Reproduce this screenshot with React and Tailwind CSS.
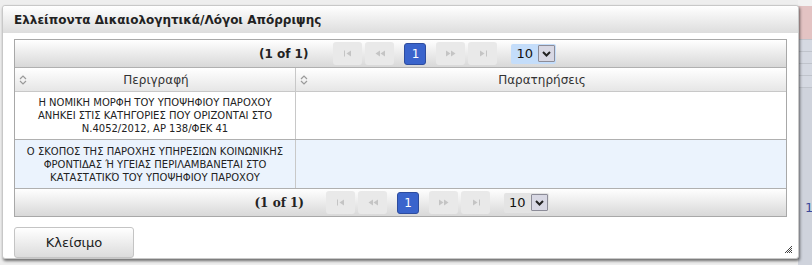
import React from 'react';

const rows = [
  ['Η ΝΟΜΙΚΗ ΜΟΡΦΗ ΤΟΥ ΥΠΟΨΗΦΙΟΥ ΠΑΡΟΧΟΥ', 'ΑΝΗΚΕΙ ΣΤΙΣ ΚΑΤΗΓΟΡΙΕΣ ΠΟΥ ΟΡΙΖΟΝΤΑΙ ΣΤΟ', 'Ν.4052/2012, ΑΡ 138/ΦΕΚ 41'],
  ['Ο ΣΚΟΠΟΣ ΤΗΣ ΠΑΡΟΧΗΣ ΥΠΗΡΕΣΙΩΝ ΚΟΙΝΩΝΙΚΗΣ', 'ΦΡΟΝΤΙΔΑΣ Ή ΥΓΕΙΑΣ ΠΕΡΙΛΑΜΒΑΝΕΤΑΙ ΣΤΟ', 'ΚΑΤΑΣΤΑΤΙΚΌ ΤΟΥ ΥΠΟΨΗΦΙΟΥ ΠΑΡΟΧΟΥ'],
];

const SortIcon = () => (
  <svg width="8" height="10" viewBox="0 0 8 10" className="shrink-0">
    <path d="M1 4 L4 1 L7 4" fill="none" stroke="#9a9a9a" strokeWidth="1.2" />
    <path d="M1 6 L4 9 L7 6" fill="none" stroke="#9a9a9a" strokeWidth="1.2" />
  </svg>
);

const NavIcon = ({ kind }) => {
  const c = '#c4c4c4';
  if (kind === 'first')
    return (
      <svg width="10" height="7" viewBox="0 0 10 7"><rect x="1" y="0.5" width="1" height="6" fill={c} /><path d="M8 0.5 L3.5 3.5 L8 6.5Z" fill={c} /></svg>
    );
  if (kind === 'prev')
    return (
      <svg width="12" height="7" viewBox="0 0 12 7"><path d="M6 0.5 L1.5 3.5 L6 6.5Z M11 0.5 L6.5 3.5 L11 6.5Z" fill={c} /></svg>
    );
  if (kind === 'next')
    return (
      <svg width="12" height="7" viewBox="0 0 12 7"><path d="M1 0.5 L5.5 3.5 L1 6.5Z M6 0.5 L10.5 3.5 L6 6.5Z" fill={c} /></svg>
    );
  return (
    <svg width="10" height="7" viewBox="0 0 10 7"><path d="M2 0.5 L6.5 3.5 L2 6.5Z" fill={c} /><rect x="8" y="0.5" width="1" height="6" fill={c} /></svg>
  );
};

const NavBtn = ({ kind }) => (
  <div className="w-[29px] h-[23px] rounded-[3px] bg-[#e9e9e9] flex items-center justify-center">
    <NavIcon kind={kind} />
  </div>
);

const Pager = ({ top }) => (
  <div
    className={`h-[28px] bg-gradient-to-b from-white to-[#d8d8d8] flex items-center justify-center ${top ? 'border-b border-[#b0b0b0] pl-[14px]' : 'border-t border-[#b0b0b0] pl-[2px]'}`}
  >
    <span
      className={`text-[12px] font-bold text-[#222] ${top ? 'mr-[25px]' : 'mr-[22px]'}`}
      style={{ fontFamily: top ? '"DejaVu Sans", sans-serif' : '"DejaVu Serif", serif' }}
    >
      (1 of 1)
    </span>
    <div className="flex items-center gap-[3px]">
      <NavBtn kind="first" />
      <NavBtn kind="prev" />
    </div>
    <div className="mx-[10px] w-[22px] h-[22px] rounded-[3px] bg-[#3a64cc] border border-[#2d4c9e] text-white text-[12px] flex items-center justify-center">
      1
    </div>
    <div className="flex items-center gap-[3px]">
      <NavBtn kind="next" />
      <NavBtn kind="last" />
    </div>
    <div className={`ml-[14px] h-[20px] flex items-center rounded-[2px] ${top ? 'bg-[#c4ddfa]' : 'bg-[#e4e4e4]'}`}>
      <span className="px-[5px] text-[13px] text-[#111]">10</span>
      <div className="w-[17px] h-[17px] mr-[1px] border border-[#8c8c98] bg-[#d8d8e4] rounded-[1px] flex items-center justify-center">
        <svg width="9" height="6" viewBox="0 0 9 6"><path d="M1 1 L4.5 4.5 L8 1" fill="none" stroke="#222" strokeWidth="2" /></svg>
      </div>
    </div>
  </div>
);

export default function App() {
  return (
    <div
      className="relative w-[812px] h-[265px] overflow-hidden bg-[#eeeeee]"
      style={{ fontFamily: '"DejaVu Sans", Verdana, sans-serif' }}
    >
      {/* page behind the dialog */}
      <div className="absolute right-0 top-0 w-[14px] h-full flex flex-col">
        <div className="h-[6px] bg-[#f2f2f2]" />
        <div className="h-[33px] bg-[#e3c3c3]" />
        <div className="h-[12px] bg-[#d5d9e2] border-t border-[#c0c4cc]" />
        <div className="h-[12px] bg-[#d5d9e2] border-t border-[#c0c4cc]" />
        <div className="h-[12px] bg-[#d5d9e2] border-t border-[#c0c4cc]" />
        <div className="h-[12px] bg-[#d5d9e2] border-t border-[#c0c4cc]" />
        <div className="flex-1 bg-[#cfd3dc] border-t border-[#c0c4cc] pt-[110px] pl-[7px] text-[13px] text-[#3a4a9a]">1</div>
      </div>

      {/* dialog */}
      <div className="absolute left-[2px] top-[5px] w-[797px] h-[254px] bg-white border border-[#c8c8c8] rounded-[3px] shadow-[1px_2px_3px_rgba(0,0,0,0.55)] flex flex-col">
        <div className="h-[28px] bg-gradient-to-b from-white to-[#dddddd] flex items-center pl-[11px] rounded-t-[3px]">
          <span className="text-[12px] font-bold text-[#222]">Ελλείποντα Δικαιολογητικά/Λόγοι Απόρριψης</span>
        </div>

        <div className="px-[11px] pt-[6px]">
          <div className="border border-[#a8a8a8]">
            <Pager top />
            <div className="flex h-[24px] bg-gradient-to-b from-white to-[#e6e6e6] border-b border-[#c8c8c8] text-[12px] text-[#333]">
              <div className="w-[281px] border-r border-[#c8c8c8] flex items-center pl-[4px]">
                <SortIcon />
                <span className="flex-1 text-center pr-[10px]">Περιγραφή</span>
              </div>
              <div className="flex-1 flex items-center pl-[4px]">
                <SortIcon />
                <span className="flex-1 text-center pr-[10px]">Παρατηρήσεις</span>
              </div>
            </div>
            {rows.map((lines, i) => (
              <div
                key={i}
                className={`flex h-[48px] ${i === 1 ? 'bg-[#ebf3fd]' : 'bg-white border-b border-[#b0b0b0]'}`}
              >
                <div className="w-[281px] border-r border-[#c8c8c8] flex flex-col items-center justify-center text-[10px] leading-[13px] text-[#222]">
                  {lines.map((l) => (
                    <div key={l}>{l}</div>
                  ))}
                </div>
                <div className="flex-1" />
              </div>
            ))}
            <Pager />
          </div>
        </div>

        <div className="px-[11px] pt-[10px]">
          <button className="w-[120px] h-[31px] rounded-[3px] border border-[#c4c4c4] bg-gradient-to-b from-white to-[#dcdcdc] text-[13px] text-[#222]">
            Κλείσιμο
          </button>
        </div>

        <svg className="absolute right-[5px] bottom-[4px]" width="9" height="9" viewBox="0 0 9 9">
          <path d="M8 1 L1 8 M8 3 L3 8 M8 5 L5 8 M8 7 L7 8" stroke="#444" strokeWidth="1" />
        </svg>
      </div>
    </div>
  );
}
